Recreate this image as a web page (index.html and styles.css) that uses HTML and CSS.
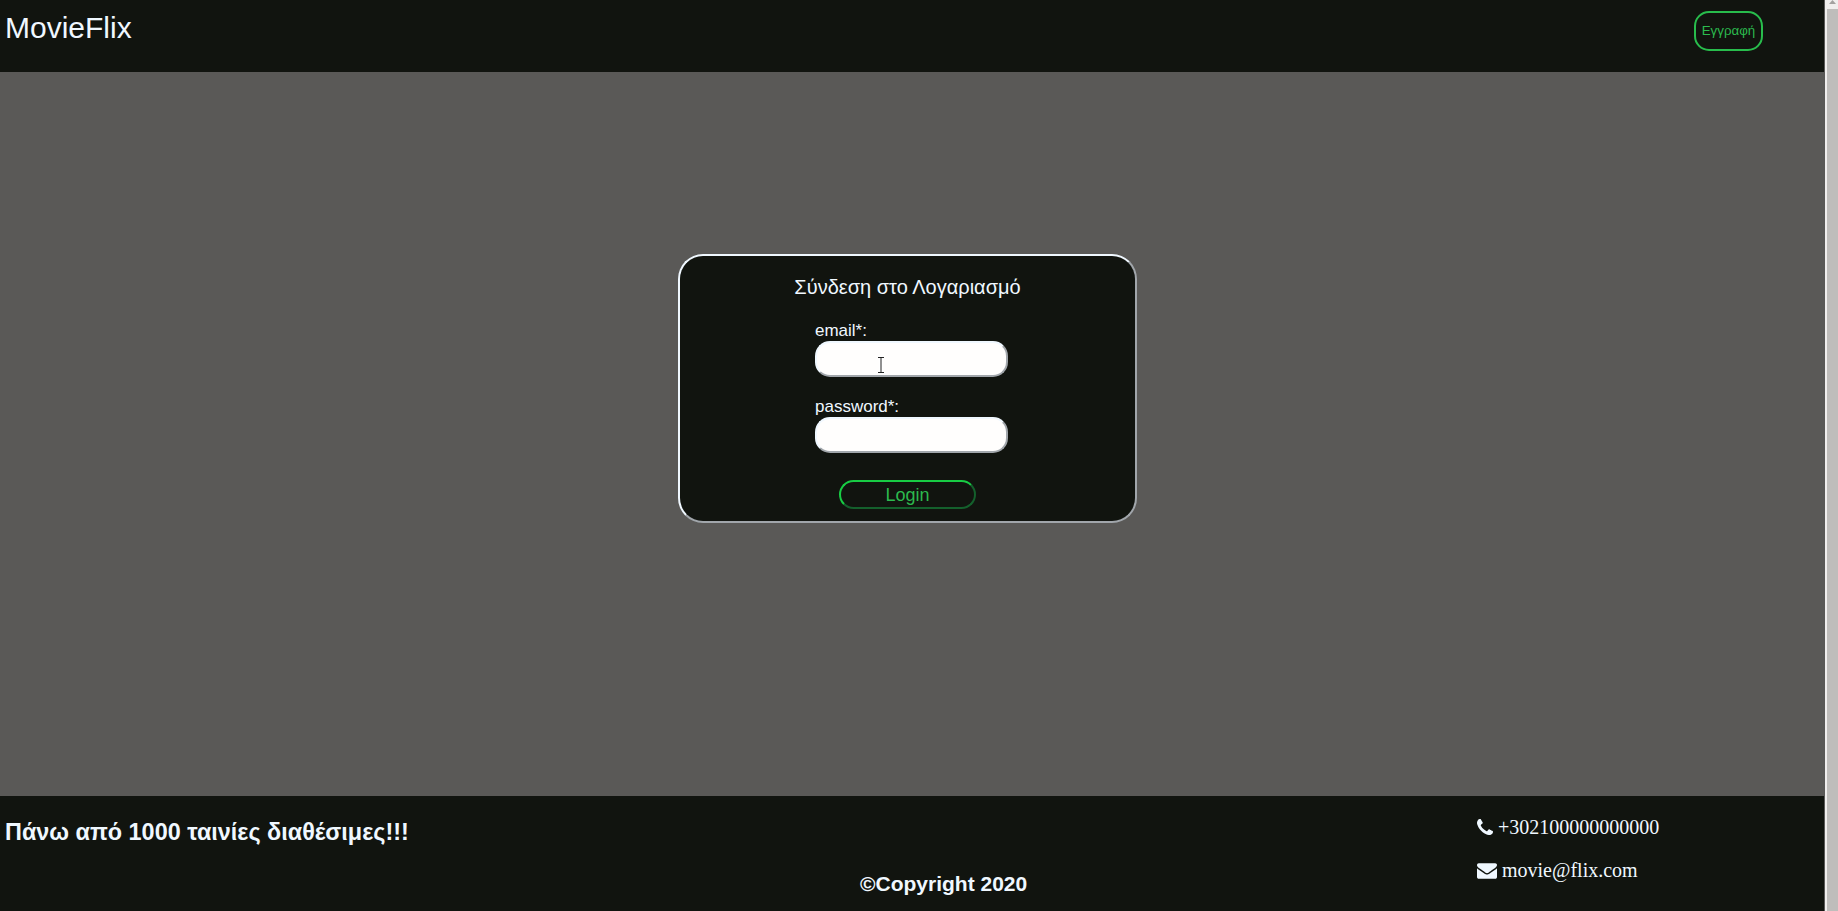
FILE: index.html
```html
<!DOCTYPE html>
<html lang="el">
<head>
<meta charset="utf-8">
<title>MovieFlix</title>
<link rel="stylesheet" href="styles.css">
</head>
<body>
<div class="page">
  <header class="header">
    <span class="brand">MovieFlix</span>
    <button class="signup" type="button">Εγγραφή</button>
  </header>
  <main class="main">
    <form class="card">
      <h1 class="title">Σύνδεση στο Λογαριασμό</h1>
      <div class="field">
        <label for="email">email*:</label>
        <input id="email" type="email">
        <svg class="cursor" viewBox="0 0 10 20" aria-hidden="true">
          <path d="M2 2.500h6M2 17.500h6M5 2v16" stroke="#fff" stroke-width="3.500" fill="none"/>
          <path d="M2 2.500h6M2 17.500h6M5 3v14" stroke="#222" stroke-width="1" fill="none"/>
        </svg>
      </div>
      <div class="field">
        <label for="password">password*:</label>
        <input id="password" type="password">
      </div>
      <button class="login" type="submit">Login</button>
    </form>
  </main>
  <footer class="footer">
    <div class="promo">
      <h3 class="tagline">Πάνω από 1000 ταινίες διαθέσιμες!!!</h3>
    </div>
    <p class="copyright">©Copyright 2020</p>
    <address class="contact">
      <div class="contact-row">
        <svg class="phone" viewBox="0 0 1408 1408" aria-hidden="true"><path fill="currentColor" d="M1408 1112q0 27-10 70.500t-21 68.500q-21 50-122 106-94 51-186 51-27 0-52.500-3.500t-57.500-12.500-47.500-14.500-55.500-20.500-49-18q-98-35-175-83-128-79-264.500-215.500t-215.500-264.500q-48-77-83-175-3-9-18-49t-20.500-55.500-14.500-47.500-12.500-57.500-3.500-52.500q0-92 51-186 56-101 106-122 25-11 68.500-21t70.500-10q14 0 21 3 18 6 53 76 11 19 30 54t35 63.500 31 53.500q3 4 17.500 25t21.500 35.500 7 28.500q0 20-28.500 50t-62 55-62 53-28.500 46q0 9 5 22.500t8.500 20.500 14 24 11.500 19q76 137 174 235t235 174q2 1 19 11.500t24 14 20.500 8.500 22.500 5q18 0 46-28.500t53-62 55-62 50-28.500q14 0 28.500 7t35.500 21.500 25 17.500q25 15 53.500 31t63.500 35 54 30q70 35 76 53 3 7 3 21z"/></svg>
        <span>+302100000000000</span>
      </div>
      <div class="contact-row">
        <svg class="mail" viewBox="0 128 1792 1408" aria-hidden="true"><path fill="currentColor" d="M1792 582v794q0 66-47 113t-113 47h-1472q-66 0-113-47t-47-113v-794q44 49 101 87 362 246 497 345 57 42 92.500 65.500t94.500 48 110 24.500h2q51 0 110-24.500t94.500-48 92.500-65.500q170-123 498-345 57-39 100-87zM1792 288q0 79-49 151t-122 123q-376 261-468 325-10 7-42.500 30.500t-54 38-52 32.500-57.500 27-50 9h-2q-23 0-50-9t-57.500-27-52-32.500-54-38-42.500-30.500q-91-64-262-182.500t-205-142.500q-62-42-117-115.500t-55-136.500q0-78 41.500-130t118.500-52h1472q65 0 112.500 47t47.500 113z"/></svg>
        <span>movie@flix.com</span>
      </div>
    </address>
  </footer>
</div>
<div class="scrollbar" aria-hidden="true">
  <svg class="arrow" viewBox="0 0 11 9"><path d="M2 4L5.500 0L9 4z" fill="#a3a19f"/></svg>
  <div class="thumb"></div>
</div>
</body>
</html>
```
FILE: styles.css
```css
* { box-sizing: border-box; }
body {
  margin: 0;
  min-height: 100vh;
  display: flex;
  background: #5a5957;
  color: aliceblue;
  font-family: "Liberation Sans", Arial, sans-serif;
}
.page {
  flex: 1;
  padding-right: 1px;
  display: flex;
  flex-direction: column;
}
.header {
  height: 72px;
  padding: 11px 61px 0 5px;
  display: flex;
  justify-content: space-between;
  align-items: flex-start;
  background: #11140f;
}
.brand { font-size: 30px; line-height: 34px; }
.signup {
  width: 69px;
  height: 40px;
  padding: 0 0 2px;
  border: 2px solid #28bd4c;
  border-radius: 15px;
  background: transparent;
  color: #2cba4e;
  font-family: "Liberation Sans", Arial, sans-serif;
}
.main {
  flex: 1;
  display: flex;
  justify-content: center;
  align-items: flex-start;
  padding: 182px 9px 0 0;
}
.card {
  width: 459px;
  padding: 19px 0 12px;
  display: flex;
  flex-direction: column;
  align-items: center;
  border: 2px outset aliceblue;
  border-radius: 25px;
  background: #11140f;
}
.title {
  margin: 0 0 22px;
  font-size: 20px;
  font-weight: 400;
  line-height: 24px;
}
.field {
  position: relative;
  width: 193px;
  margin: 0 0 20px 8px;
  display: flex;
  flex-direction: column;
  font-size: 17px;
  line-height: 20px;
}
.field input {
  height: 36px;
  padding: 0 10px;
  border: 2px outset aliceblue;
  border-radius: 15px;
  background: #fffefd;
  font-size: 17px;
}
.cursor {
  position: absolute;
  left: 61px;
  top: 34px;
  width: 10px;
  height: 20px;
}
.login {
  width: 137px;
  height: 29px;
  margin-top: 7px;
  padding: 0;
  border: 2px solid;
  border-color: #18cc44 #14602c #14602c #18cc44;
  border-radius: 15px;
  background: transparent;
  color: #2cba4e;
  font: 18px/20px "Liberation Sans", Arial, sans-serif;
}
.footer {
  height: 115px;
  padding-left: 5px;
  display: grid;
  grid-template-columns: 1fr 617px 347px;
  background: #11140f;
}
.promo { font-size: 20px; }
.tagline { margin: 22px 0 0; line-height: 28px; }
.copyright {
  margin: 76px 0 0;
  font-size: 21px;
  font-weight: 700;
  line-height: 24px;
}
.contact {
  padding-top: 20px;
  display: flex;
  flex-direction: column;
  gap: 20px;
  font: 20px/23px "Liberation Serif", "Times New Roman", serif;
}
.contact-row { display: flex; align-items: center; gap: 5px; }
.phone { width: 16px; height: 16px; margin-bottom: 2px; }
.mail { width: 20px; height: 16px; }
.scrollbar {
  width: 13px;
  display: flex;
  flex-direction: column;
  border-left: 2px solid #f0eeed;
  background: #f0eeed;
}
.arrow { width: 11px; height: 9px; }
.thumb { flex: 1; background: #bfbdbb; }
```
